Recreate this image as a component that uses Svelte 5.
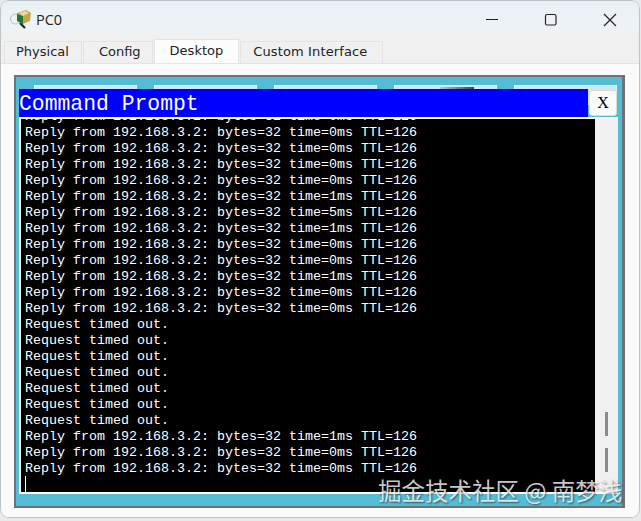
<script>
	const tabs = ['Physical', 'Config', 'Desktop', 'Custom Interface'];
	const reply = (t) => `Reply from 192.168.3.2: bytes=32 time=${t}ms TTL=126`;
	const timeout = 'Request timed out.';
	const lines = [
		...[0, 0, 0, 0, 0, 1, 5, 1, 0, 0, 1, 0, 0].map(reply),
		...Array(7).fill(timeout),
		...[1, 0, 0].map(reply)
	];
</script>

<div class="window">
	<header class="titlebar">
		<svg class="app-icon" width="24" height="24" viewBox="9 8 24 24">
			<circle cx="15.5" cy="19" r="5" fill="#eef2f3" stroke="#b4bec2" />
			<path d="M20 23l5 5" stroke="#1c2428" stroke-width="2.2" />
			<path d="M17 13l9-3 5 3-1 8-7 3-6-3z" fill="#c6a64c" />
			<path d="M17 14l6 2v8l-6-3z" fill="#1d7a36" />
			<path d="M19 13l6-2 4 2-6 3z" fill="#e9dc9c" />
		</svg>
		<span class="title">PC0</span>
		<div class="controls">
			<svg width="14" height="14" viewBox="0 0 14 14"><path d="M1 6.5h12" stroke="#222" stroke-width="1.2" /></svg>
			<svg width="14" height="14" viewBox="0 0 14 14"><rect x="1.5" y="1.5" width="10.5" height="10.5" rx="1.5" fill="none" stroke="#222" stroke-width="1.2" /></svg>
			<svg width="14" height="14" viewBox="0 0 14 14"><path d="M1 1l12 12M13 1L1 13" stroke="#222" stroke-width="1.2" /></svg>
		</div>
	</header>

	<nav class="tabs">
		{#each tabs as tab}
			<div class="tab" class:active={tab === 'Desktop'}>{tab}</div>
		{/each}
	</nav>

	<main class="content">
		<div class="frame">
			<div class="launchers">
				{#each Array(5) as _, i}
					<div class="launcher" class:marked={i === 3}></div>
				{/each}
			</div>
			<div class="prompt-head">
				<div class="prompt-title">Command Prompt</div>
				<button class="close">X</button>
			</div>
			<div class="terminal">
				<div class="output">
					{#each lines as line}
						<div class="line">{line}</div>
					{/each}
					<div class="cursor"></div>
				</div>
				<div class="scrollbar">
					<div class="grip"></div>
					<div class="grip"></div>
				</div>
			</div>
		</div>
	</main>

	<div class="watermark">掘金技术社区 @ 南梦浅</div>
</div>

<style>
	:global(body) {
		margin: 0;
		background: #e9e9e9;
	}

	.window {
		position: relative;
		box-sizing: border-box;
		width: 640px;
		height: 518px;
		display: flex;
		flex-direction: column;
		background: #f8f8f8;
		border: 1px solid #bcc4c8;
		border-radius: 9px;
		overflow: hidden;
	}

	.titlebar {
		height: 38px;
		flex: none;
		display: flex;
		align-items: center;
		padding-left: 8px;
		background: linear-gradient(#e9f0f5, #eef2f5 60%, #f0f0f0);
	}

	.title {
		margin: 0 0 2px 3px;
		font: 14.5px "Open Sans", sans-serif;
		color: #222;
	}

	.controls {
		margin-left: auto;
		display: flex;
		gap: 45px;
		margin-right: 22px;
	}

	.tabs {
		height: 24px;
		flex: none;
		display: flex;
		padding-left: 3px;
		gap: 1px;
		background: #f0f0f0;
		border-bottom: 1px solid #e4e4e4;
	}

	.tab {
		box-sizing: border-box;
		height: 22px;
		margin-top: 2px;
		padding: 0 12px 3px 11px;
		display: flex;
		align-items: center;
		font: 13px "DejaVu Sans", sans-serif;
		color: #222;
		background: #f0f0f0;
		border: 1px solid #e4e4e4;
		border-bottom: 0;
	}

	.tab:nth-child(2) {
		padding: 0 11px 3px 15px;
	}

	.tab:nth-child(4) {
		padding: 0 15px 3px 12px;
		letter-spacing: 0.13px;
	}

	.tab.active {
		height: 24px;
		margin-top: 0;
		padding: 0 15px 3px 15px;
		background: #fcfcfc;
	}

	.content {
		flex: 1;
		min-height: 0;
		padding: 11px 14px 9px 13px;
		display: flex;
		background: #fafafa;
	}

	.frame {
		flex: 1;
		min-width: 0;
		min-height: 0;
		position: relative;
		display: flex;
		flex-direction: column;
		background: #55bcd6;
		border: 2px solid #6b7378;
		border-right-width: 3px;
		padding: 12px 4px 12px 3px;
	}

	.launchers {
		position: absolute;
		top: 8px;
		left: 18px;
		display: flex;
		gap: 17px;
	}

	.launcher {
		width: 103px;
		height: 20px;
		box-sizing: border-box;
		background: #cfe8ef;
		border: 1px solid #dff1f5;
	}

	.launcher.marked::after {
		content: '';
		display: block;
		margin: 1px 0 0 45px;
		width: 34px;
		height: 2px;
		background: linear-gradient(90deg, #b9c8cc, #444);
	}

	.prompt-head {
		position: relative;
		display: flex;
		height: 28px;
		flex: none;
	}

	.prompt-title {
		flex: 1;
		background: #0000ff;
		color: #fff;
		font: 21.4px/30px "Liberation Mono", monospace;
	}

	.close {
		flex: none;
		box-sizing: border-box;
		width: 28px;
		height: 26px;
		margin: 1px 1px 0 1px;
		padding: 0;
		background: #fafafa;
		border: 1px solid #dcdcd4;
		border-radius: 3px;
		font: 16px "Liberation Serif", serif;
		color: #000;
	}

	.terminal {
		flex: 1;
		min-height: 0;
		display: flex;
		background: #fff;
		padding: 2px 0 2px 2px;
	}

	.output {
		flex: 1;
		min-width: 0;
		overflow: hidden;
		display: flex;
		flex-direction: column;
		justify-content: flex-end;
		background: #000;
		padding-left: 4px;
	}

	.line {
		flex: none;
		height: 16px;
		font: 13.33px/18px "Liberation Mono", monospace;
		color: #fff;
		white-space: pre;
	}

	.cursor {
		flex: none;
		width: 1px;
		height: 16px;
		background: #fff;
	}

	.scrollbar {
		flex: none;
		box-sizing: border-box;
		width: 23px;
		display: flex;
		flex-direction: column;
		justify-content: flex-end;
		align-items: center;
		gap: 12px;
		padding-bottom: 20px;
		background: #f0f0f0;
	}

	.grip {
		width: 3px;
		height: 24px;
		background: #8a8a8a;
	}

	.watermark {
		position: absolute;
		left: 377px;
		top: 472px;
		font: 23.5px "Noto Sans CJK SC", sans-serif;
		color: rgba(255, 255, 255, 0.78);
		text-shadow: 1px 1px 2px rgba(0, 0, 0, 0.55);
		white-space: nowrap;
	}
</style>
